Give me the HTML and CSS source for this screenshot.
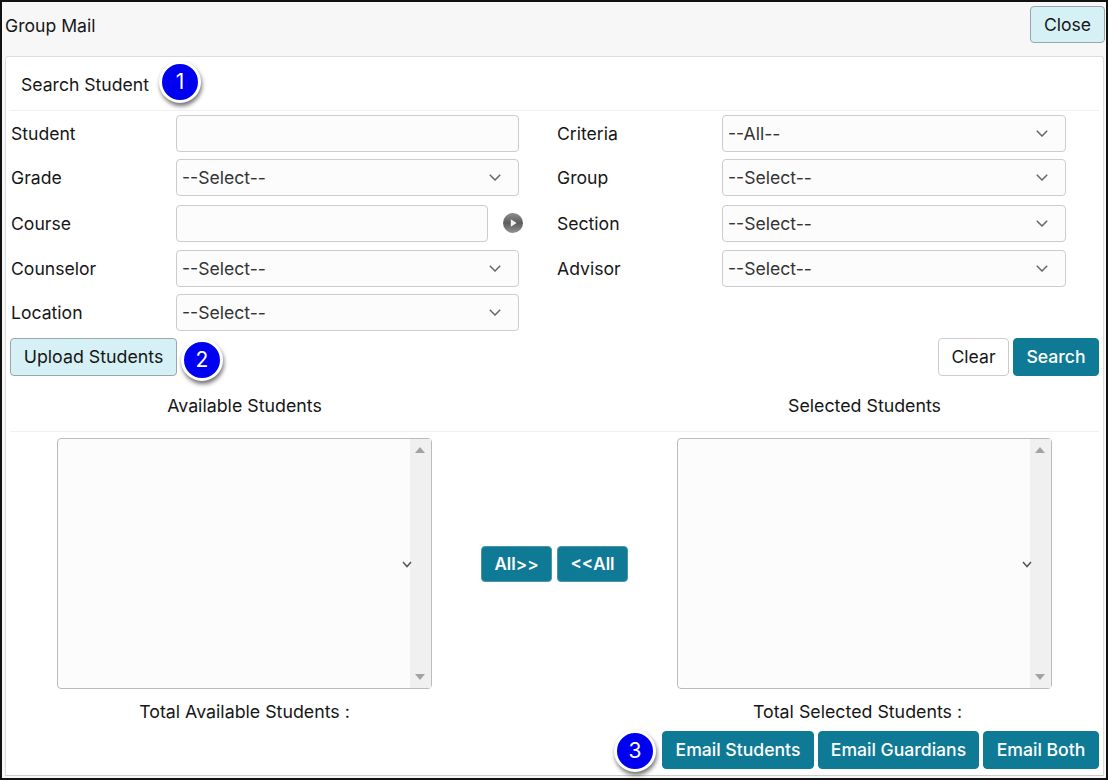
FILE: index.html
```html
<!DOCTYPE html>
<html lang="en">
<head>
<meta charset="utf-8">
<title>Group Mail</title>
<link rel="stylesheet" href="styles.css">
</head>
<body>
<div class="frame">
  <header class="top">
    <span class="top-title">Group Mail</span>
    <button class="btn btn-light btn-close">Close</button>
  </header>
  <main class="panel">
    <h2 class="panel-title">Search Student</h2>
    <div class="form">
      <label>Student</label><div class="field"></div><span></span>
      <label>Criteria</label><div class="field select">--All--<svg class="chev" viewBox="0 0 12 7"><path d="M.8.8l5.2 5.2L11.2.8"/></svg></div>
      <label>Grade</label><div class="field select">--Select--<svg class="chev" viewBox="0 0 12 7"><path d="M.8.8l5.2 5.2L11.2.8"/></svg></div><span></span>
      <label>Group</label><div class="field select">--Select--<svg class="chev" viewBox="0 0 12 7"><path d="M.8.8l5.2 5.2L11.2.8"/></svg></div>
      <label>Course</label>
      <div class="field-wrap"><div class="field field-short"></div>
        <svg class="play" viewBox="0 0 20 20"><defs><linearGradient id="pg" x1="0" y1="0" x2="0" y2="1"><stop offset="0" stop-color="#8f8f8f"/><stop offset=".5" stop-color="#5c5c5c"/><stop offset="1" stop-color="#949494"/></linearGradient></defs><circle cx="10" cy="10" r="10" fill="url(#pg)"/><path d="M7.8 6.2v7.6l5.8-3.8z" fill="#f4f4f4"/></svg>
      </div><span></span>
      <label>Section</label><div class="field select">--Select--<svg class="chev" viewBox="0 0 12 7"><path d="M.8.8l5.2 5.2L11.2.8"/></svg></div>
      <label>Counselor</label><div class="field select">--Select--<svg class="chev" viewBox="0 0 12 7"><path d="M.8.8l5.2 5.2L11.2.8"/></svg></div><span></span>
      <label>Advisor</label><div class="field select">--Select--<svg class="chev" viewBox="0 0 12 7"><path d="M.8.8l5.2 5.2L11.2.8"/></svg></div>
      <label>Location</label><div class="field select">--Select--<svg class="chev" viewBox="0 0 12 7"><path d="M.8.8l5.2 5.2L11.2.8"/></svg></div>
    </div>
    <div class="actions">
      <button class="btn btn-light btn-upload">Upload Students</button>
      <div class="actions-right">
        <button class="btn btn-white btn-clear">Clear</button>
        <button class="btn btn-teal btn-search">Search</button>
      </div>
    </div>
    <div class="list-heads">
      <span>Available Students</span>
      <span>Selected Students</span>
    </div>
    <div class="lists">
      <div class="list-col">
        <div class="listbox">
          <div class="scroll"><i class="arrow-up"></i><i class="arrow-down"></i></div>
          <svg class="list-chev" viewBox="0 0 10 7"><path d="M1 1l4 4.5L9 1"/></svg>
        </div>
        <p class="total">Total Available Students :</p>
      </div>
      <div class="mid">
        <button class="btn btn-teal btn-small">All&gt;&gt;</button>
        <button class="btn btn-teal btn-small">&lt;&lt;All</button>
      </div>
      <div class="list-col">
        <div class="listbox">
          <div class="scroll"><i class="arrow-up"></i><i class="arrow-down"></i></div>
          <svg class="list-chev" viewBox="0 0 10 7"><path d="M1 1l4 4.5L9 1"/></svg>
        </div>
        <p class="total total-selected">Total Selected Students :</p>
      </div>
    </div>
    <div class="footer-btns">
      <button class="btn btn-teal btn-students">Email Students</button>
      <button class="btn btn-teal btn-guardians">Email Guardians</button>
      <button class="btn btn-teal btn-both">Email Both</button>
    </div>
  </main>
  <span class="badge badge-1">1</span>
  <span class="badge badge-2">2</span>
  <span class="badge badge-3">3</span>
</div>
</body>
</html>
```

FILE: styles.css
```css
* { box-sizing: border-box; }
html, body { margin: 0; padding: 0; background: #fff; }
body {
  width: 1108px;
  height: 780px;
  overflow: hidden;
  font-family: Inter, "Liberation Sans", sans-serif;
  font-size: 17.6px;
  color: #161616;
}
.frame {
  position: relative;
  width: 1108px;
  height: 780px;
  border: 2px solid #111;
  background: #f7f7f7;
}
.top {
  display: flex;
  justify-content: space-between;
  align-items: flex-start;
  height: 54px;
  padding: 4px 1px 0 3px;
}
.top-title { line-height: 40px; }
.btn {
  font-family: inherit;
  font-size: 17.6px;
  height: 38px;
  padding: 0 0 1px;
  border-radius: 4px;
  border: 1px solid #aaa;
  cursor: pointer;
  white-space: nowrap;
}
.btn-light { background: #d6f1f5; border-color: #9aa7aa; color: #161616; }
.btn-close { width: 75px; height: 37px; padding: 0; }
.btn-upload { width: 167px; font-size: 17.8px; }
.btn-clear { width: 71px; }
.btn-search { width: 86px; }
.btn-students { width: 152px; }
.btn-guardians { width: 161px; }
.btn-both { width: 116px; }
.btn-white { background: #fff; border-color: #ccc; color: #161616; }
.btn-teal { background: #0f7a96; border-color: #0f7a96; color: #fff; font-weight: 500; }
.btn-small { width: 71px; height: 36px; padding: 0; font-size: 17px; font-weight: 600; border-color: #4d96a9; }
.panel {
  width: 1099px;
  height: 720px;
  margin-left: 3px;
  background: #fff;
  border: 1px solid #ddd;
  border-bottom: 1px solid #ccc;
  border-radius: 3px 3px 0 0;
}
.panel-title {
  margin: 0 4px;
  height: 54px;
  padding-left: 11px;
  line-height: 55px;
  font-size: 17.6px;
  font-weight: 400;
  border-bottom: 1px solid #f0f0f0;
}
.form {
  display: grid;
  grid-template-columns: 165px 343px 38px 165px 344px;
  grid-template-rows: 44px 45.5px 45.5px 44px 37px;
  padding: 4px 0 0 5px;
  align-items: start;
}
.form label { line-height: 37px; }
.field {
  height: 37px;
  background: #fcfcfc;
  border: 1px solid #ccc;
  border-radius: 4px;
  position: relative;
  line-height: 35px;
  padding-left: 5px;
  color: #333;
}
.field-wrap { display: flex; align-items: center; width: 347px; }
.field-short { flex: none; width: 312px; }
.play { flex: none; width: 20px; height: 20px; margin-left: 15px; }
.chev {
  position: absolute;
  right: 17px;
  top: 14px;
  width: 12px;
  height: 7px;
  fill: none;
  stroke: #666;
  stroke-width: 1.5;
}
.actions {
  display: flex;
  justify-content: space-between;
  margin-top: 7px;
  padding: 0 4px;
}
.actions-right { display: flex; gap: 4px; }
.list-heads {
  display: grid;
  grid-template-columns: 469px 151px 469px;
  padding-left: 4px;
  height: 55px;
  line-height: 59px;
  font-size: 17.8px;
  text-align: center;
}
.list-heads span:last-child { grid-column: 3; }
.lists {
  display: grid;
  grid-template-columns: 469px 151px 469px;
  margin: 0 4px;
  border-top: 1px solid #f0f0f0;
  padding-top: 6px;
}
.list-col { display: flex; flex-direction: column; align-items: center; }
.listbox {
  position: relative;
  width: 375px;
  height: 251px;
  background: #fcfcfc;
  border: 1px solid #bbb;
  border-radius: 4px;
}
.scroll {
  position: absolute;
  right: 0;
  top: 0;
  bottom: 0;
  width: 21px;
  background: #f0f0f0;
}
.arrow-up, .arrow-down {
  position: absolute;
  left: 5px;
  width: 0;
  height: 0;
  border-left: 5px solid transparent;
  border-right: 5px solid transparent;
}
.arrow-up { top: 8px; border-bottom: 6px solid #a3a3a3; }
.arrow-down { bottom: 8px; border-top: 6px solid #a3a3a3; }
.list-chev {
  position: absolute;
  right: 19px;
  top: 122px;
  width: 10px;
  height: 7px;
  fill: none;
  stroke: #555;
  stroke-width: 1.5;
}
.total { margin: 0; height: 42px; line-height: 45px; font-size: 17.8px; }
.total-selected { margin-right: 14px; }
.mid {
  display: flex;
  justify-content: center;
  gap: 5px;
  padding-top: 108px;
  align-items: flex-start;
}
.footer-btns {
  display: flex;
  justify-content: flex-end;
  gap: 4px;
  padding-right: 4px;
}
.badge {
  position: absolute;
  width: 42px;
  height: 42px;
  border-radius: 50%;
  background: #0000f0;
  border: 3px solid #fff;
  box-shadow: 1px 3px 4px rgba(0, 0, 0, .55);
  color: #fff;
  font-size: 21px;
  line-height: 36px;
  text-align: center;
}
.badge-1 { left: 157px; top: 59px; }
.badge-2 { left: 179px; top: 337px; }
.badge-3 { left: 612px; top: 728px; }
```
